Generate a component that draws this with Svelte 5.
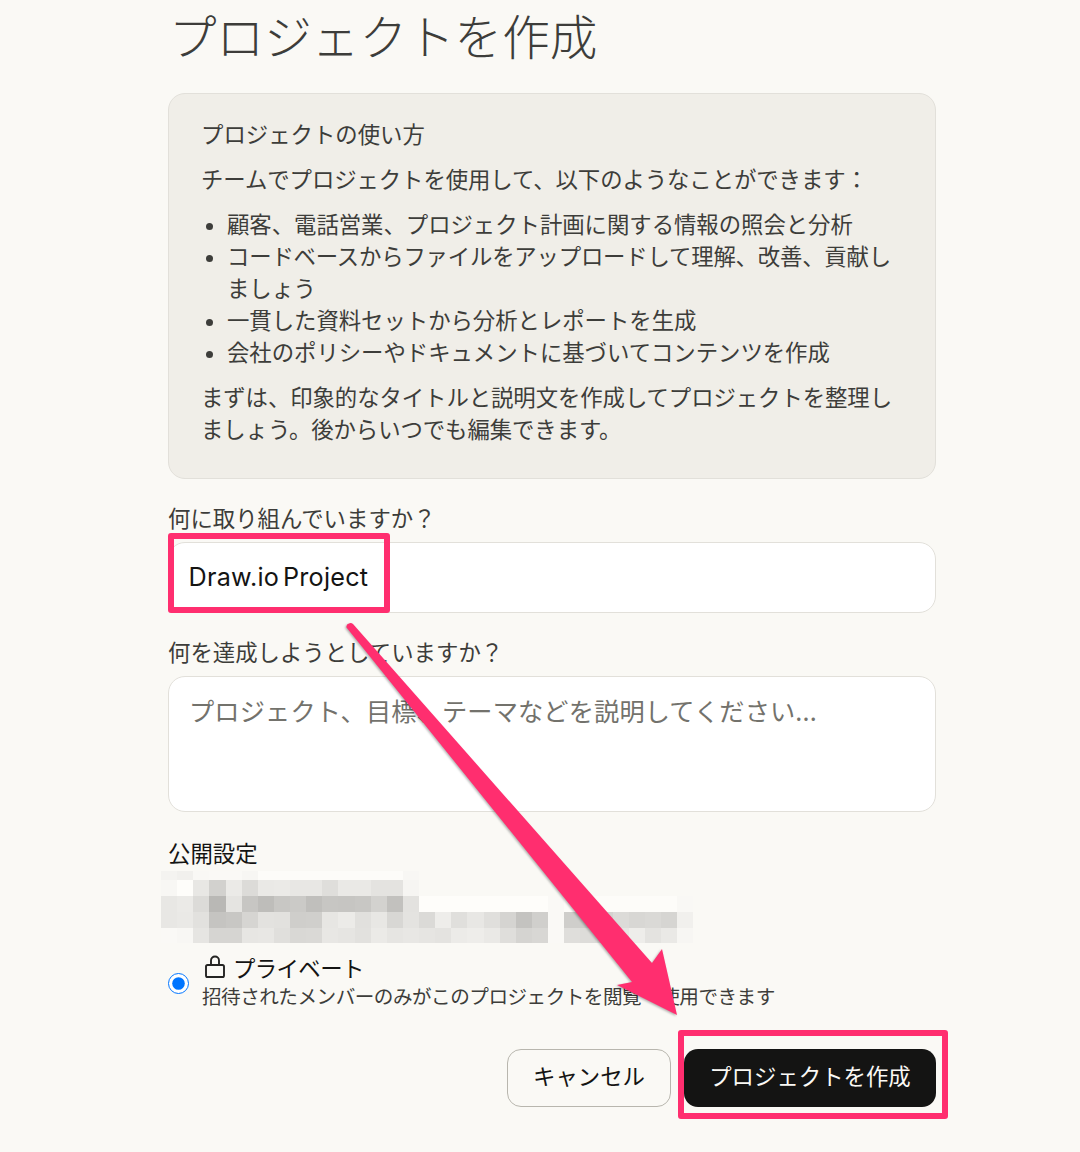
<script>
  // gray levels of the mosaic that hides the blurred text, one hex pair per cell
  const mosaic = [
    { height: 9, cells: 'f4f1f9fafaf7fdfdfdfdfdfdfdfdfdf8' },
    { height: 16, cells: 'f8fee8d2ebdceaebe8e8dfeaeae4e4f6' },
    { height: 16, cells: 'e8ebdcb9e5c7bec8cbc0c7c6c8d3c2e3fefefefefefefefefafdfdfdfdfdfdfdf9' },
    { height: 16, cells: 'e8eae2c5c8d6e3e2cfd0e7ece1e8d8e4dbeee0e8e0d5c4d0facfced4dcd8dad6f1' },
    { height: 15, cells: 'faf8e6d6d6e7e8e0d9dae8e6e2ebe6e8e6e4eceeeadfd5d8fadfdde0e7eee4eaf7' },
  ];

  function cellColor(hex) {
    const v = parseInt(hex, 16);
    return `rgb(${v}, ${v - 1}, ${v - 4})`;
  }

  function cellsOf(row) {
    return row.cells.match(/../g).map(cellColor);
  }
</script>

<div class="page">
  <main class="form">
    <h1>プロジェクトを作成</h1>

    <section class="howto">
      <p>プロジェクトの使い方</p>
      <p class="tight">チームでプロジェクトを使用して、以下のようなことができます：</p>
      <ul>
        <li>顧客、電話営業、プロジェクト計画に関する情報の照会と分析</li>
        <li class="tighter">コードベースからファイルをアップロードして理解、改善、貢献しましょう</li>
        <li>一貫した資料セットから分析とレポートを生成</li>
        <li>会社のポリシーやドキュメントに基づいてコンテンツを作成</li>
      </ul>
      <p class="tight">まずは、印象的なタイトルと説明文を作成してプロジェクトを整理しましょう。後からいつでも編集できます。</p>
    </section>

    <label class="field-label" for="name">何に取り組んでいますか？</label>
    <input id="name" class="name-input" type="text" value="Draw.io Project" readonly />

    <label class="field-label" for="goal">何を達成しようとしていますか？</label>
    <textarea id="goal" class="goal-input" placeholder="プロジェクト、目標、テーマなどを説明してください..." readonly></textarea>

    <div class="field-label visibility">公開設定</div>
    <div class="mosaic" aria-hidden="true">
      {#each mosaic as row}
        <div class="mosaic-row" style="height: {row.height}px">
          {#each cellsOf(row) as color}
            <span class="mosaic-cell" style="background-color: {color}"></span>
          {/each}
        </div>
      {/each}
    </div>

    <label class="private">
      <input type="radio" name="visibility" checked />
      <span class="private-text">
        <span class="private-title">
          <svg width="24" height="24" viewBox="0 0 24 24" fill="none" stroke="#242422" stroke-width="1.9" aria-hidden="true">
            <path d="M9 10V5.5a4 4 0 0 1 8 0V10" />
            <rect x="4" y="10" width="18" height="12" rx="1.6" />
          </svg>
          プライベート
        </span>
        <span class="private-desc">招待されたメンバーのみがこのプロジェクトを閲覧・使用できます</span>
      </span>
    </label>

    <div class="actions">
      <button class="cancel">キャンセル</button>
      <button class="create">プロジェクトを作成</button>
    </div>
  </main>

  <div class="mark mark-name"></div>
  <div class="mark mark-create"></div>
  <svg class="arrow" width="1080" height="1152" viewBox="0 0 1080 1152" aria-hidden="true">
    <path d="M346.5 627.5 Q346 624 349 623.5 Q351 622.5 353 624 L652 963 L662 949 L677 1015 L617 985 L632 982 Z" fill="#ff2e6f" />
  </svg>
</div>

<style>
  :global(body) {
    margin: 0;
    background-color: #faf9f5;
  }

  .page {
    position: relative;
    width: 1080px;
    height: 1152px;
    overflow: hidden;
    font-family: 'Noto Sans CJK JP', 'Noto Sans', sans-serif;
    font-size: 22.4px;
    line-height: 32px;
    color: #3d3d3a;
  }

  .form {
    display: flex;
    flex-direction: column;
    width: 768px;
    margin-left: 168px;
    padding-top: 9px;
  }

  h1 {
    margin: 0 0 24px;
    font-family: 'Liberation Serif', 'Noto Sans CJK JP', serif;
    font-size: 47.6px;
    font-weight: 300;
    line-height: 60px;
    padding-left: 1px;
  }

  .howto {
    box-sizing: border-box;
    height: 386px;
    padding: 23px 32px 0 32px;
    background-color: #f0eee8;
    border: 1px solid #e2e0da;
    border-radius: 17px;
    display: flex;
    flex-direction: column;
    gap: 13px;
  }

  .howto p {
    margin: 0;
  }

  .howto .tight {
    letter-spacing: -0.08px;
  }

  .howto ul {
    margin: 0;
    padding-left: 26px;
    letter-spacing: -0.04px;
  }

  .howto li::marker {
    font-size: 19px;
  }

  .howto .tighter {
    letter-spacing: -0.2px;
  }

  .field-label {
    display: block;
    margin-top: 22px;
    margin-bottom: 9px;
  }

  .name-input,
  .goal-input {
    box-sizing: border-box;
    width: 100%;
    background-color: #fff;
    border: 1px solid #e2e0da;
    border-radius: 17px;
    outline: none;
    color: #141413;
    font-size: 25.2px;
  }

  .name-input {
    height: 71px;
    padding: 0 20px 2px 19.5px;
    font-family: Inter, 'Noto Sans', sans-serif;
    letter-spacing: 0.24px;
    word-spacing: -3.6px;
  }

  .goal-input {
    display: block;
    height: 136px;
    padding: 15px 20px;
    resize: none;
    font-family: 'Noto Sans CJK JP', sans-serif;
    line-height: 36px;
    letter-spacing: 0.16px;
  }

  .goal-input::placeholder {
    color: #73726c;
    opacity: 1;
  }

  .visibility {
    margin-top: 24px;
    margin-bottom: 3px;
    color: #141413;
  }

  .mosaic {
    margin-left: -7px;
    margin-bottom: 8px;
  }

  .mosaic-row {
    display: flex;
  }

  .mosaic-cell {
    flex: 0 0 16.125px;
  }

  .private {
    display: flex;
    align-items: center;
    gap: 13px;
  }

  .private input {
    width: 21px;
    height: 21px;
    margin: 7px 0 0;
    flex: none;
  }

  .private-text {
    display: flex;
    flex-direction: column;
  }

  .private-title {
    display: flex;
    align-items: center;
    gap: 7px;
    color: #141413;
    letter-spacing: -0.6px;
  }

  .private-desc {
    font-size: 19.6px;
    line-height: 25px;
    letter-spacing: -0.5px;
  }

  .actions {
    display: flex;
    justify-content: flex-end;
    gap: 13px;
    margin-top: 41px;
  }

  button {
    box-sizing: border-box;
    height: 58px;
    padding-bottom: 8px;
    border-radius: 14px;
    font-family: inherit;
    font-size: 22.4px;
    cursor: pointer;
  }

  .cancel {
    width: 164px;
    background: transparent;
    border: 1px solid #b8b6ae;
    color: #141413;
  }

  .create {
    width: 252px;
    background-color: #141413;
    border: none;
    color: #faf9f5;
  }

  .mark {
    position: absolute;
    box-sizing: border-box;
    border: 6px solid #ff2e6f;
    border-radius: 3px;
  }

  .mark-name {
    left: 168px;
    top: 533px;
    width: 222px;
    height: 80px;
  }

  .mark-create {
    left: 678px;
    top: 1030px;
    width: 270px;
    height: 89px;
  }

  .arrow {
    position: absolute;
    left: 0;
    top: 0;
    filter: drop-shadow(-1px 1px 1px rgba(0, 0, 0, 0.3));
  }
</style>
